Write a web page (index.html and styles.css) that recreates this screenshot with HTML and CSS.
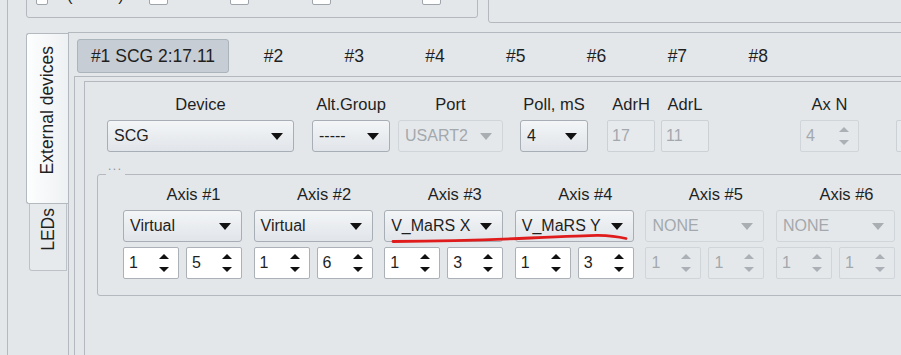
FILE: index.html
```html
<!DOCTYPE html>
<html lang="en">
<head>
  <meta charset="UTF-8" />
  <title>External devices</title>
  <link rel="stylesheet" href="styles.css">
</head>
<body>
  <div class="window">
    <div class="top-row">
      <div class="box-a">
        <div class="cb cb1"><span class="check"></span><span class="cb-text">(          )</span></div>
        <div class="cb cb2"><span class="check"></span></div>
        <div class="cb cb3"><span class="check"></span></div>
        <div class="cb cb4"><span class="check"></span></div>
        <div class="cb"><span class="check"></span></div>
      </div>
      <div class="box-b"></div>
    </div>

    <div class="main">
      <div class="side-tabs">
        <div class="side-tab active"><span>External devices</span></div>
        <div class="side-tab plain"><span>LEDs</span></div>
      </div>

      <div class="side-pane">
        <div class="tab-bar">
          <div class="tab active">#1 SCG 2:17.11</div>
          <div class="tab">#2</div>
          <div class="tab">#3</div>
          <div class="tab">#4</div>
          <div class="tab">#5</div>
          <div class="tab">#6</div>
          <div class="tab">#7</div>
          <div class="tab">#8</div>
        </div>

        <div class="tab-pane">
          <div class="page">
            <div class="dev-row">
              <div class="field f-device">
                <div class="field-label">Device</div>
                <div class="combo"><span>SCG</span><i class="arrow"></i></div>
              </div>
              <div class="field f-alt">
                <div class="field-label">Alt.Group</div>
                <div class="combo"><span>-----</span><i class="arrow"></i></div>
              </div>
              <div class="field f-port">
                <div class="field-label">Port</div>
                <div class="combo off"><span>USART2</span><i class="arrow"></i></div>
              </div>
              <div class="field f-poll">
                <div class="field-label">Poll, mS</div>
                <div class="combo"><span>4</span><i class="arrow"></i></div>
              </div>
              <div class="field f-adrh">
                <div class="field-label">AdrH</div>
                <div class="edit">17</div>
              </div>
              <div class="field f-adrl">
                <div class="field-label">AdrL</div>
                <div class="edit">11</div>
              </div>
              <div class="field f-axn">
                <div class="field-label">Ax N</div>
                <div class="spin off"><span>4</span><span class="spin-btns"><i class="up"></i><i class="down"></i></span></div>
              </div>
              <div class="field f-more">
                <div class="field-label"></div>
                <div class="edit"></div>
              </div>
            </div>

            <div class="axes">
              <span class="axes-title">...</span>
              <div class="axis-grid">
                <div class="axis">
                  <div class="axis-label">Axis #1</div>
                  <div class="combo"><span>Virtual</span><i class="arrow"></i></div>
                  <div class="spins">
                    <div class="spin"><span>1</span><span class="spin-btns"><i class="up"></i><i class="down"></i></span></div>
                    <div class="spin"><span>5</span><span class="spin-btns"><i class="up"></i><i class="down"></i></span></div>
                  </div>
                </div>
                <div class="axis">
                  <div class="axis-label">Axis #2</div>
                  <div class="combo"><span>Virtual</span><i class="arrow"></i></div>
                  <div class="spins">
                    <div class="spin"><span>1</span><span class="spin-btns"><i class="up"></i><i class="down"></i></span></div>
                    <div class="spin"><span>6</span><span class="spin-btns"><i class="up"></i><i class="down"></i></span></div>
                  </div>
                </div>
                <div class="axis">
                  <div class="axis-label">Axis #3</div>
                  <div class="combo"><span>V_MaRS X</span><i class="arrow"></i></div>
                  <div class="spins">
                    <div class="spin"><span>1</span><span class="spin-btns"><i class="up"></i><i class="down"></i></span></div>
                    <div class="spin"><span>3</span><span class="spin-btns"><i class="up"></i><i class="down"></i></span></div>
                  </div>
                </div>
                <div class="axis">
                  <div class="axis-label">Axis #4</div>
                  <div class="combo"><span>V_MaRS Y</span><i class="arrow"></i></div>
                  <div class="spins">
                    <div class="spin"><span>1</span><span class="spin-btns"><i class="up"></i><i class="down"></i></span></div>
                    <div class="spin"><span>3</span><span class="spin-btns"><i class="up"></i><i class="down"></i></span></div>
                  </div>
                </div>
                <div class="axis">
                  <div class="axis-label">Axis #5</div>
                  <div class="combo off"><span>NONE</span><i class="arrow"></i></div>
                  <div class="spins">
                    <div class="spin off"><span>1</span><span class="spin-btns"><i class="up"></i><i class="down"></i></span></div>
                    <div class="spin off"><span>1</span><span class="spin-btns"><i class="up"></i><i class="down"></i></span></div>
                  </div>
                </div>
                <div class="axis">
                  <div class="axis-label">Axis #6</div>
                  <div class="combo off"><span>NONE</span><i class="arrow"></i></div>
                  <div class="spins">
                    <div class="spin off"><span>1</span><span class="spin-btns"><i class="up"></i><i class="down"></i></span></div>
                    <div class="spin off"><span>1</span><span class="spin-btns"><i class="up"></i><i class="down"></i></span></div>
                  </div>
                </div>
              </div>
            </div>
          </div>
        </div>
      </div>
    </div>
  </div>

  <!-- hand-drawn red underline on top of the screenshot -->
  <svg class="scribble" width="901" height="355" viewBox="0 0 901 355">
    <path d="M393 241.5 Q 470 240.8 530 238 T 598 235.3 Q 614 235.5 626 238.5" />
  </svg>
</body>
</html>
```

FILE: styles.css
```css
body {
  margin: 0;
  width: 901px;
  height: 355px;
  overflow: hidden;
  position: relative;
  background-color: #e3e7ea;
  font-family: "Liberation Sans", Arial, sans-serif;
  font-size: 16.5px;
  color: #1f1f1f;
}
.window {
  width: 1000px;
  height: 355px;
  margin-left: 7px;
  border-left: 1px solid #b3b9bf;
}

/* top strip (cut off) */
.top-row {
  display: flex;
  align-items: flex-start;
  height: 32px;
}
.box-a {
  display: flex;
  align-items: flex-start;
  box-sizing: border-box;
  width: 452px;
  height: 28px;
  margin: -10px 0 0 18px;
  padding-left: 9px;
  border: 1px solid #b3b9bf;
  border-radius: 3px;
}
.box-b {
  flex: 1;
  box-sizing: border-box;
  height: 33px;
  margin: -10px 0 0 10px;
  border: 1px solid #b3b9bf;
  border-radius: 3px;
}
.cb {
  display: flex;
  align-items: flex-start;
}
.cb1 { width: 113px; }
.cb2 { width: 81px; }
.cb3 { width: 82px; }
.cb4 { width: 110px; }
.check {
  box-sizing: border-box;
  width: 19px;
  height: 14px;
  border: 1px solid #9ea5ac;
  border-radius: 2px;
  background: #fff;
}
.cb1 .check { width: 12px; }
.cb-text {
  margin: -5px 0 0 19px;
  line-height: 18px;
  white-space: pre;
}

/* left vertical tabs */
.main {
  display: flex;
  height: 323px;
}
.side-tabs {
  flex: none;
  box-sizing: border-box;
  width: 60px;
  padding-left: 18px;
}
.side-tab {
  display: flex;
  align-items: center;
  justify-content: center;
  box-sizing: border-box;
  padding-bottom: 16px;
  font-size: 17.5px;
}
.side-tab span {
  writing-mode: vertical-rl;
  transform: rotate(180deg);
  white-space: nowrap;
}
.side-tab.active {
  width: 42px;
  height: 171px;
  margin-top: 1px;
  border: 1px solid #b3b9bf;
  border-right: none;
  border-radius: 3px 0 0 3px;
  background: linear-gradient(to right, #fdfefe, #eef1f3);
}
.side-tab.plain {
  width: 38px;
  height: 67px;
  margin-left: 3px;
  border: 1px solid #bcc2c8;
  border-top: none;
  border-radius: 0 0 0 3px;
  background: #e7eaed;
}
.side-pane {
  flex: 1;
  display: flex;
  flex-direction: column;
  border-top: 1px solid #b3b9bf;
  border-left: 1px solid #b3b9bf;
}

/* inner horizontal tabs */
.tab-bar {
  display: flex;
  align-items: flex-start;
  box-sizing: border-box;
  height: 43px;
  padding: 6px 0 0 8px;
}
.tab {
  display: flex;
  align-items: center;
  justify-content: center;
  box-sizing: border-box;
  width: 80.8px;
  height: 34px;
  font-size: 17.5px;
}
.tab.active {
  width: 152px;
  margin-right: 4px;
  background: #c7cdd5;
  border: 1px solid #abb3bb;
  border-radius: 3px;
}
.tab-pane {
  flex: 1;
  display: flex;
  flex-direction: column;
  margin-left: 5px;
  border-top: 1px solid #b3b9bf;
  border-left: 1px solid #b3b9bf;
}
.page {
  flex: 1;
  margin: 4px 0 0 9px;
  padding-top: 13px;
  border-top: 1px solid #b3b9bf;
  border-left: 1px solid #b3b9bf;
}

/* device row */
.dev-row {
  display: flex;
  align-items: flex-start;
  padding-left: 22px;
}
.field {
  flex: none;
  display: flex;
  flex-direction: column;
}
.field-label, .axis-label {
  height: 19px;
  line-height: 19px;
  margin-bottom: 6px;
  text-align: center;
  white-space: nowrap;
}
.f-device { width: 187px; }
.f-alt { width: 78px; margin-left: 18px; }
.f-port { width: 105px; margin-left: 8px; }
.f-poll { width: 68px; margin-left: 17px; }
.f-adrh { width: 48px; margin-left: 19px; }
.f-adrl { width: 48px; margin-left: 6px; }
.f-axn { width: 59px; margin-left: 91px; }
.f-more { width: 60px; margin-left: 37px; }

/* controls */
.combo {
  display: flex;
  align-items: center;
  box-sizing: border-box;
  height: 32px;
  padding: 0 10px 0 6px;
  border: 1px solid #a7aeb5;
  border-radius: 3px;
  background: linear-gradient(#f3f5f7, #e1e5e9);
  font-size: 16px;
  white-space: nowrap;
}
.arrow {
  flex: none;
  margin-left: auto;
  width: 0;
  height: 0;
  border-left: 6px solid transparent;
  border-right: 6px solid transparent;
  border-top: 7px solid #111;
}
.spin {
  display: flex;
  align-items: center;
  box-sizing: border-box;
  height: 32px;
  padding-left: 5px;
  border: 1px solid #abb1b7;
  border-radius: 2px;
  background: #fff;
  font-size: 16px;
}
.spin-btns {
  display: flex;
  flex-direction: column;
  gap: 8px;
  margin: 0 9px 0 auto;
}
.up, .down {
  width: 0;
  height: 0;
  border-left: 5px solid transparent;
  border-right: 5px solid transparent;
}
.up { border-bottom: 5px solid #111; }
.down { border-top: 5px solid #111; }
.edit {
  box-sizing: border-box;
  height: 32px;
  padding-left: 4px;
  line-height: 30px;
  border: 1px solid #ccd1d5;
  border-radius: 2px;
  background: #e7eaed;
  color: #a3a8ad;
  font-size: 16px;
}
.combo.off, .spin.off {
  background: #e5e8eb;
  border-color: #d0d5d9;
  color: #a3a8ad;
}
.combo.off .arrow { border-top-color: #a9aeb3; }
.spin.off .up { border-bottom-color: #aab0b5; }
.spin.off .down { border-top-color: #aab0b5; }

/* axes group */
.axes {
  position: relative;
  box-sizing: border-box;
  width: 830px;
  margin: 22px 0 0 12px;
  padding: 10px 0 16px 25px;
  border: 1px solid #b3b9bf;
  border-radius: 3px;
}
.axes-title {
  position: absolute;
  left: 8px;
  top: -15px;
  padding: 0 2px 6px;
  line-height: 12px;
  font-size: 12px;
  letter-spacing: 1.5px;
  color: #8a8f94;
  background: #e3e7ea;
}
.axis-grid {
  display: grid;
  grid-template-columns: repeat(6, 119px);
  column-gap: 11.6px;
}
.axis-label {
  padding-left: 22px;
}
.spins {
  display: flex;
  gap: 7px;
  margin-top: 5px;
}
.spins .spin {
  width: 56px;
}

.scribble {
  position: absolute;
  left: 0;
  top: 0;
  pointer-events: none;
}
.scribble path {
  fill: none;
  stroke: #e01b1b;
  stroke-width: 2.8;
  stroke-linecap: round;
}
```
